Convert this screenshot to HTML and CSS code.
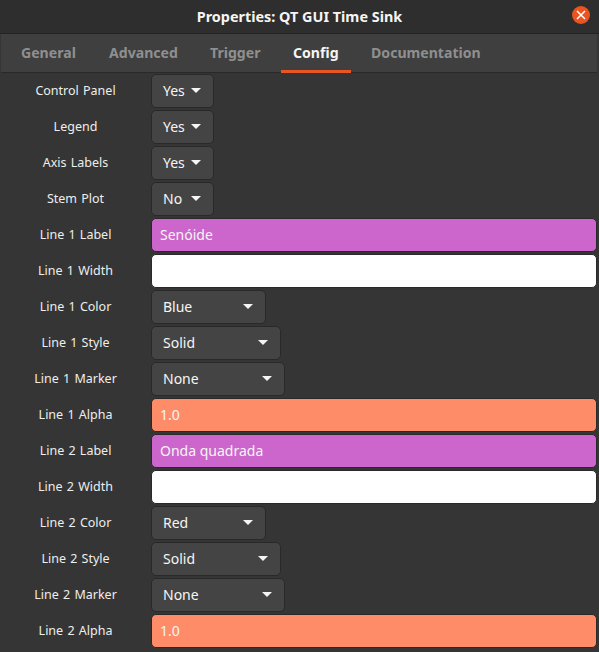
FILE: index.html
```html
<!DOCTYPE html>
<html lang="en">
<head>
    <meta charset="UTF-8">
    <title>Properties: QT GUI Time Sink</title>
    <link rel="stylesheet" href="styles.css">
</head>
<body>
<div class="dialog">
    <div class="titlebar">
        <span class="title">Properties: QT GUI Time Sink</span>
        <span class="close">
            <svg width="10" height="10" viewBox="0 0 10 10"><path d="M1 1L9 9M9 1L1 9" stroke="#fff" stroke-width="1.5" fill="none"/></svg>
        </span>
    </div>
    <ul class="tabs">
        <li class="tab tab-general">General</li>
        <li class="tab tab-advanced">Advanced</li>
        <li class="tab tab-trigger">Trigger</li>
        <li class="tab tab-config active">Config</li>
        <li class="tab">Documentation</li>
    </ul>
    <div class="form">
        <div class="row"><label>Control Panel</label><div class="combo w-yes">Yes<i class="arrow"></i></div></div>
        <div class="row"><label>Legend</label><div class="combo w-yes">Yes<i class="arrow"></i></div></div>
        <div class="row"><label>Axis Labels</label><div class="combo w-yes">Yes<i class="arrow"></i></div></div>
        <div class="row"><label>Stem Plot</label><div class="combo w-yes">No<i class="arrow"></i></div></div>
        <div class="row"><label>Line 1 Label</label><div class="entry purple">Senóide</div></div>
        <div class="row"><label>Line 1 Width</label><div class="entry white"></div></div>
        <div class="row"><label>Line 1 Color</label><div class="combo w-color">Blue<i class="arrow"></i></div></div>
        <div class="row"><label>Line 1 Style</label><div class="combo w-style">Solid<i class="arrow"></i></div></div>
        <div class="row"><label>Line 1 Marker</label><div class="combo w-marker">None<i class="arrow"></i></div></div>
        <div class="row"><label>Line 1 Alpha</label><div class="entry orange">1.0</div></div>
        <div class="row"><label>Line 2 Label</label><div class="entry purple">Onda quadrada</div></div>
        <div class="row"><label>Line 2 Width</label><div class="entry white"></div></div>
        <div class="row"><label>Line 2 Color</label><div class="combo w-color">Red<i class="arrow"></i></div></div>
        <div class="row"><label>Line 2 Style</label><div class="combo w-style">Solid<i class="arrow"></i></div></div>
        <div class="row"><label>Line 2 Marker</label><div class="combo w-marker">None<i class="arrow"></i></div></div>
        <div class="row"><label>Line 2 Alpha</label><div class="entry orange">1.0</div></div>
    </div>
</div>
</body>
</html>
```

FILE: styles.css
```css
*{ padding: 0; margin: 0; box-sizing: border-box}
li{ list-style: none}
html, body{ width: 599px; height: 652px; overflow: hidden; background: #353535}
body{ font-family: "Noto Sans", "Open Sans", sans-serif; color: #f6f5f4}
.dialog{ width: 599px; height: 652px; display: flex; flex-direction: column}

.titlebar{ height: 34px; background: #2e2e2e; border-bottom: 1px solid #232323;
    display: flex; align-items: center; justify-content: center; position: relative}
.title{ font-size: 14.4px; font-weight: 700; color: #f6f5f4}
.close{ width: 18px; height: 18px; border-radius: 50%; background: #e95420;
    position: absolute; left: 572px; top: 6px;
    display: flex; align-items: center; justify-content: center}

.tabs{ height: 39px; background: #3f3f3f; border-bottom: 1px solid #292929;
    display: flex; padding-left: 20px; margin: 0 2px 0 1px}
.tab{ font-size: 14.1px; font-weight: 700; color: #8f8f8f; line-height: 38px; position: relative}
.tab-general{ width: 88px}
.tab-advanced{ width: 101px}
.tab-trigger{ width: 83px}
.tab-config{ width: 78px}
.tab.active{ color: #f6f5f4}
.tab.active::after{ content: ""; position: absolute; left: -12px; width: 70px; height: 3px;
    bottom: -1px; background: #e95420}

.form{ display: flex; flex-direction: column; gap: 2px; padding: 1px 2px 0 0}
.row{ height: 34px; display: flex; align-items: center}
.row label{ width: 151px; flex: none; text-align: center; font-size: 12.5px; color: #eeeeec;
    word-spacing: 1px; padding-bottom: 2px}

.combo{ height: 34px; background: #444; border: 1px solid #292929; border-radius: 5px;
    font-size: 14px; color: #f6f5f4; padding: 0 12px 2px 11px;
    display: flex; align-items: center; justify-content: space-between}
.w-yes{ width: 63px}
.w-color{ width: 115px}
.w-style{ width: 130px}
.w-marker{ width: 134px}
.arrow{ width: 0; height: 0; border-left: 5px solid transparent; border-right: 5px solid transparent;
    border-top: 5px solid #f6f5f4}

.entry{ flex: 1; height: 34px; border: 1px solid #292929; border-radius: 5px;
    font-size: 14px; line-height: 32px; padding-left: 8px; color: #f6f5f4}
.purple{ background: #cc66cc}
.white{ background: #fff}
.orange{ background: #ff8c69}
```
